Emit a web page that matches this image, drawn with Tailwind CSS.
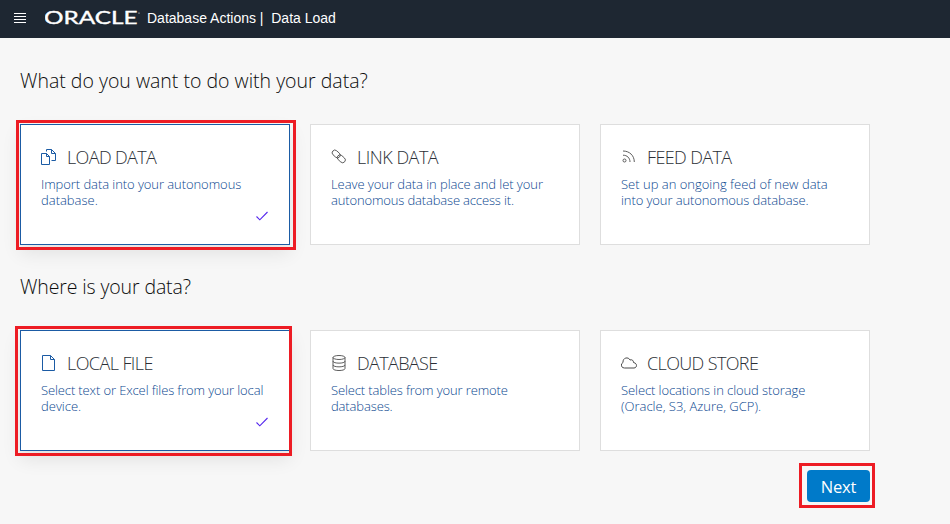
<!DOCTYPE html>
<html lang="en">
<head>
<meta charset="utf-8">
<title>Database Actions | Data Load</title>
<script src="https://cdn.jsdelivr.net/npm/@tailwindcss/browser@4"></script>
</head>
<body class="w-[950px] h-[524px] overflow-hidden bg-[#f7f7f7] font-['Open_Sans','Noto_Sans',sans-serif] font-light">
<header class="flex h-[38px] items-center bg-[#1e2732] pb-[2px] pl-[14px] text-white">
  <svg class="mr-[19px] h-3 w-3 shrink-0" viewBox="0 0 12 12" fill="none" stroke="#fff" shape-rendering="crispEdges"><path d="M0 1.5h12M0 4.5h12M0 7.5h12M0 10.5h12"/></svg>
  <svg class="h-5 w-[95px] shrink-0" viewBox="0 0 95 20" fill="#fff"><text x="-1" y="15.700" font-family="Lato" font-weight="400" font-size="16.500" stroke="#fff" stroke-width=".35" textLength="93.500" lengthAdjust="spacingAndGlyphs">ORACLE</text><circle cx="94" cy="5" r=".6"/></svg>
  <span class="ml-[7px] whitespace-pre font-['Liberation_Sans',Arial,sans-serif] text-[14px] font-normal leading-5">Database Actions |  Data Load</span>
</header>
<main class="w-[870px] pl-5">
  <h1 class="h-[86px] pt-[29px] text-[19.5px] leading-7 text-[#0c0c0c]">What do you want to do with your data?</h1>
  <section class="grid grid-cols-3 gap-5">
    <article class="relative h-[121px] border border-[#1b5ba4] bg-white px-5 pt-[22px] shadow-[0_8px_18px_rgba(0,0,0,0.09)]">
      <div class="flex h-[20px] items-center">
        <svg class="mr-[10px] h-4 w-4" viewBox="0 0 16 16" fill="none" stroke="#1b5ba4"><path d="M.5 4.500h5l3 3v8h-8zM5.500 4.500v3h3M5.500 2.500v-2h5l4 4v7h-4M10.500 .5v4h4"/></svg>
        <h2 class="text-[18px] leading-5 tracking-[-0.63px] text-[#2b2f36]">LOAD DATA</h2>
      </div>
      <p class="mt-[9px] text-[13px] leading-4 text-[#0b478f]"><span class="block tracking-[-0.07px]">Import data into your autonomous</span><span class="block">database.</span></p>
      <svg class="absolute left-[235px] top-[86px] h-3 w-3" viewBox="0 0 12 12" fill="none" stroke="#5527ee" stroke-width="1.1"><path d="M.5 5.500l3.300 3.300L11.500 1"/></svg>
    </article>
    <article class="h-[121px] border border-[#dedede] bg-white px-5 pt-[22px]">
      <div class="flex h-[20px] items-center">
        <svg class="mr-[10px] h-4 w-4" viewBox="0 0 16 16" fill="none" stroke="#4b4b4b" stroke-width=".85"><rect x="-4.500" y="-2.700" width="9" height="5.400" rx="2.700" transform="translate(5.200 5) rotate(42)"/><rect x="-4.500" y="-2.700" width="9" height="5.400" rx="2.700" transform="translate(10.300 9.800) rotate(42)"/></svg>
        <h2 class="text-[18px] leading-5 tracking-[-0.5px] text-[#2b2f36]">LINK DATA</h2>
      </div>
      <p class="mt-[9px] text-[13px] leading-4 text-[#0b478f]"><span class="block tracking-[-0.06px]">Leave your data in place and let your</span><span class="block tracking-[-0.15px]">autonomous database access it.</span></p>
    </article>
    <article class="h-[121px] border border-[#dedede] bg-white px-5 pt-[22px]">
      <div class="flex h-[20px] items-center">
        <svg class="mr-[10px] h-4 w-4" viewBox="0 0 16 16" fill="none" stroke="#4b4b4b" stroke-width=".9"><circle cx="3.500" cy="11.500" r="1.500"/><path d="M2 6.200C6.200 6.200 9 9 9 13M2 2C8.500 2 13.300 6.500 13.300 13"/></svg>
        <h2 class="text-[18px] leading-5 tracking-[-0.63px] text-[#2b2f36]">FEED DATA</h2>
      </div>
      <p class="mt-[9px] text-[13px] leading-4 text-[#0b478f]"><span class="block">Set up an ongoing feed of new data</span><span class="block tracking-[-0.1px]">into your autonomous database.</span></p>
    </article>
  </section>
  <h1 class="h-[85px] pt-[28px] text-[19.500px] leading-7 tracking-[-0.12px] text-[#0c0c0c]">Where is your data?</h1>
  <section class="grid grid-cols-3 gap-5">
    <article class="relative h-[121px] border border-[#1b5ba4] bg-white px-5 pt-[22px] shadow-[0_8px_18px_rgba(0,0,0,0.09)]">
      <div class="flex h-[20px] items-center">
        <svg class="mr-[10px] h-4 w-4" viewBox="0 0 16 16" fill="none" stroke="#1b5ba4"><path d="M1.500 .5h8l4 4v11h-12zM9.500 .5v4h4"/></svg>
        <h2 class="text-[18px] leading-5 tracking-[-0.58px] text-[#2b2f36]">LOCAL FILE</h2>
      </div>
      <p class="mt-[9px] whitespace-nowrap text-[13px] leading-4 text-[#0b478f]"><span class="block tracking-[-0.12px]">Select text or Excel files from your local</span><span class="block">device.</span></p>
      <svg class="absolute left-[235px] top-[86px] h-3 w-3" viewBox="0 0 12 12" fill="none" stroke="#5527ee" stroke-width="1.1"><path d="M.5 5.500l3.300 3.300L11.500 1"/></svg>
    </article>
    <article class="h-[121px] border border-[#dedede] bg-white px-5 pt-[22px]">
      <div class="flex h-[20px] items-center">
        <svg class="mr-[10px] h-4 w-4" viewBox="0 0 16 16" fill="none" stroke="#4b4b4b" stroke-width=".9"><ellipse cx="8" cy="2.500" rx="6" ry="2"/><path d="M2 2.500v11c0 2.700 12 2.700 12 0v-11M2 6.200c0 2.600 12 2.600 12 0M2 9.900c0 2.600 12 2.600 12 0"/></svg>
        <h2 class="text-[18px] leading-5 tracking-[-0.65px] text-[#2b2f36]">DATABASE</h2>
      </div>
      <p class="mt-[9px] text-[13px] leading-4 text-[#0b478f]"><span class="block tracking-[-0.13px]">Select tables from your remote</span><span class="block tracking-[-0.13px]">databases.</span></p>
    </article>
    <article class="h-[121px] border border-[#dedede] bg-white px-5 pt-[22px]">
      <div class="flex h-[20px] items-center">
        <svg class="mr-[10px] h-4 w-4" viewBox="0 0 16 16" fill="none" stroke="#4b4b4b"><path d="M3.500 13A2.900 2.900 0 0 1 2 7.500C1.500 2.500 7.500 1.500 9 5C11 4.200 12.500 5.500 12.500 7.500C16.500 8 16.300 13 13 13z"/></svg>
        <h2 class="text-[18px] leading-5 tracking-[-0.63px] text-[#2b2f36]">CLOUD STORE</h2>
      </div>
      <p class="mt-[9px] text-[13px] leading-4 text-[#0b478f]"><span class="block tracking-[-0.09px]">Select locations in cloud storage</span><span class="block">(Oracle, S3, Azure, GCP).</span></p>
    </article>
  </section>
  <div class="mt-[19px] flex justify-end">
    <button class="h-8 w-[63px] rounded-sm bg-[#007ac9] pt-px text-[16.500px] font-normal leading-8 tracking-[-0.2px] text-white">Next</button>
  </div>
</main>
<div class="absolute left-4 top-[120px] h-[130px] w-[280px] border-3 border-[#ed1c24]"></div>
<div class="absolute left-[15px] top-[326px] h-[130px] w-[277px] border-3 border-[#ed1c24]"></div>
<div class="absolute left-[799px] top-[463px] h-[45px] w-[76px] border-3 border-[#ed1c24]"></div>
</body>
</html>
